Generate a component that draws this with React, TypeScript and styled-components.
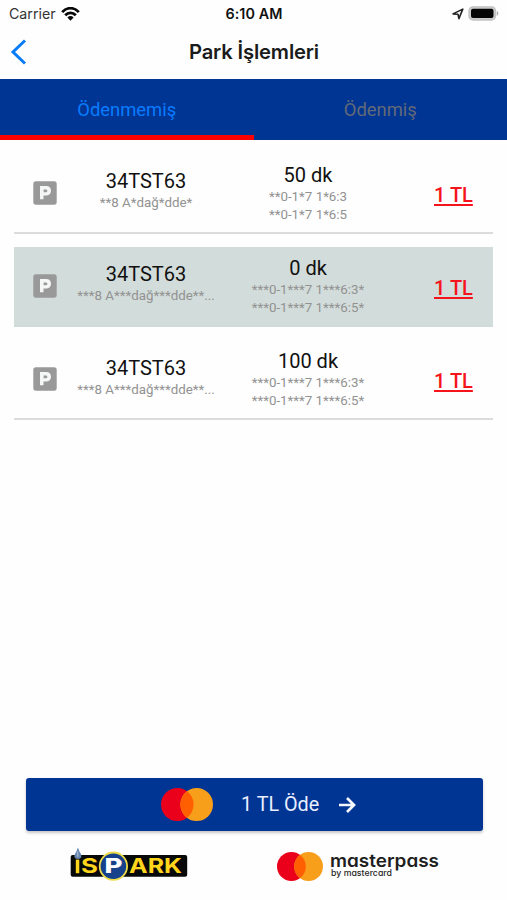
import React from "react";
import styled, { createGlobalStyle } from "styled-components";

const GlobalStyle = createGlobalStyle`
  * { box-sizing: border-box; }
  body { margin: 0; background: #fefefe; font-family: Roboto, sans-serif; color: #111; }
`;

const Screen = styled.main`
  width: 507px;
  height: 900px;
  display: flex;
  flex-direction: column;
  overflow: hidden;
  background: #fefefe;
`;

const StatusBar = styled.div`
  height: 27px;
  display: grid;
  grid-template-columns: 1fr auto 1fr;
  align-items: center;
  padding: 0 8px 0 9px;
  font-family: Inter, sans-serif;
  font-size: 14.2px;
  line-height: 27px;
`;

const StatusSide = styled.div<{ $end?: boolean }>`
  display: flex;
  align-items: center;
  gap: ${(p) => (p.$end ? 4 : 5.5)}px;
  justify-content: ${(p) => (p.$end ? "flex-end" : "flex-start")};
  color: #333;
`;

const Clock = styled.time`
  font-weight: 600;
  font-size: 14.3px;
  letter-spacing: 0.1px;
`;

const NavBar = styled.header`
  height: 52.4px;
  display: grid;
  grid-template-columns: 40px 1fr 39px;
  align-items: center;
  padding: 0 10px 1.5px;
`;

const BackButton = styled.button`
  display: flex;
  border: 0;
  padding: 0;
  background: none;
`;

const Title = styled.h1`
  margin: 0;
  text-align: center;
  font-family: Inter, sans-serif;
  font-weight: 600;
  font-size: 20.2px;
  letter-spacing: -0.15px;
  line-height: 50px;
  color: #1b1b1b;
`;

const Tabs = styled.nav`
  display: flex;
  height: 60.3px;
  background: #003594;
`;

const Tab = styled.button<{ $active?: boolean }>`
  flex: 1;
  border: 0;
  border-bottom: 5px solid ${(p) => (p.$active ? "#fe0000" : "transparent")};
  padding: 6px 0 0;
  background: none;
  font: 400 18.4px/50px Roboto, sans-serif;
  color: ${(p) => (p.$active ? "#087cff" : "#626a77")};
`;

const List = styled.section`
  flex: 1;
  display: flex;
  flex-direction: column;
  gap: 13.3px;
  padding: 14px 14px 0;
`;

const Row = styled.article<{ $selected?: boolean }>`
  height: 80px;
  display: grid;
  grid-template-columns: 62px 140px 184px 1fr;
  align-items: center;
  border-bottom: 2px solid ${(p) => (p.$selected ? "#cedbd8" : "#dcdcdc")};
  background: ${(p) => (p.$selected ? "#d2dcda" : "transparent")};
`;

const ParkBadge = styled.div`
  width: 24px;
  height: 24px;
  margin-left: 19px;
  display: flex;
`;

const Details = styled.div<{ $raised?: boolean }>`
  display: flex;
  flex-direction: column;
  align-items: center;
  white-space: nowrap;
  padding-top: ${(p) => (p.$raised ? 0 : 1)}px;
  padding-bottom: ${(p) => (p.$raised ? 4 : 0)}px;
`;

const Main = styled.strong`
  font-weight: 400;
  font-size: 20px;
  line-height: 25px;
  color: #111;
`;

const Small = styled.span`
  font-size: 13.35px;
  line-height: 18px;
  color: #929292;
`;

const Price = styled.a`
  padding: 4px 0 0 34px;
  font-weight: 500;
  font-size: 20px;
  line-height: 24px;
  white-space: nowrap;
  color: #f5141b;
  text-decoration: underline;
  text-decoration-thickness: 1.5px;
  text-underline-offset: 2px;
`;

const Footer = styled.footer`
  height: 122px;
  padding: 0 24px 0 26px;
`;

const PayButton = styled.button`
  width: 457px;
  height: 53px;
  display: flex;
  align-items: center;
  padding: 0 0 0 135px;
  border: 0;
  border-radius: 3px;
  background: #003594;
  box-shadow: 0 2px 3px rgba(0, 0, 0, 0.22);
  color: #e9efff;
  font: 400 19.8px/53px Roboto, sans-serif;
`;

const PayLabel = styled.span`
  margin: 0 19px 0 28px;
  white-space: nowrap;
`;

const Brands = styled.div`
  display: flex;
  align-items: flex-start;
  padding: 15px 0 0 44px;
  gap: 89px;
`;

function Wifi() {
  return (
    <svg width="19" height="14" viewBox="0 0 19 14" fill="none" stroke="#080808" strokeWidth="2.8">
      <path d="M1.2 5.1C6-.1 13-.1 17.8 5.1" />
      <path d="M4.2 8.3C7.3 5 11.7 5 14.8 8.3" />
      <path d="M6.4 10.4Q9.5 7.8 12.6 10.4L9.5 13.7Z" fill="#080808" stroke="none" />
    </svg>
  );
}

function LocationArrow() {
  return (
    <svg width="12" height="12" viewBox="0 0 12 12" fill="none" stroke="#222" strokeWidth="1.6" strokeLinejoin="round">
      <path d="M1 5.9L10.8 1.1L6.9 10.6L6 6.2Z" />
    </svg>
  );
}

function Battery() {
  return (
    <svg width="31" height="15" viewBox="0 0 31 15">
      <rect x="1" y=".8" width="26.5" height="13.2" rx="4" fill="#ccc" stroke="#c2c2c2" strokeWidth="1.3" />
      <rect x="3" y="2.8" width="22.5" height="9.3" rx="2" fill="#050505" />
      <path d="M28.8 4.8Q32 7.4 28.8 10Z" fill="#aaa" />
    </svg>
  );
}

function Parking() {
  return (
    <svg width="24" height="24" viewBox="0 0 24 24">
      <rect x=".3" y=".3" width="23.4" height="23.4" rx="2.6" fill="#999" />
      <path fillRule="evenodd" fill="#f5f7f6" d="M7 5H13C16.3 5 18 6.8 18 9.8C18 12.9 16.2 14.6 13 14.6H10.5V18.2H7ZM10.6 8.4V11.2H12.7C15 11.2 15 8.4 12.7 8.4Z" />
    </svg>
  );
}

function Circles({ width, height }: { width: number; height: number }) {
  return (
    <svg width={width} height={height} viewBox="0 0 52 32.6" preserveAspectRatio="none">
      <circle cx="16.3" cy="16.3" r="16.3" fill="#eb001b" />
      <circle cx="35.7" cy="16.3" r="16.3" fill="#f79e1b" />
      <path d="M26 3.2A16.3 16.3 0 0 1 26 29.4A16.3 16.3 0 0 1 26 3.2Z" fill="#ff5f00" />
    </svg>
  );
}

function IsparkLogo() {
  return (
    <svg width="118" height="36" viewBox="0 0 118 36">
      <rect x=".7" y="9" width="116.5" height="21.8" rx="2" fill="#070808" />
      <g fill="#ffd51c" fontFamily="Inter, sans-serif" fontWeight="700" fontSize="20">
        <path d="M5.8 13.6H9.3V27.2H5.8Z" />
        <text x="11" y="27.2" textLength="17" lengthAdjust="spacingAndGlyphs">S</text>
        <text x="59" y="27.2" textLength="53" lengthAdjust="spacingAndGlyphs">ARK</text>
      </g>
      <circle cx="43.4" cy="20.2" r="13.7" fill="#17418b" stroke="#eedc4a" strokeWidth="1.8" />
      <text x="34.6" y="27.2" fill="#fff" fontFamily="Inter, sans-serif" fontWeight="800" fontSize="20" textLength="18" lengthAdjust="spacingAndGlyphs">P</text>
      <path d="M7.9 1.5L9.5 5.6C13 10.8 11.2 13 7.9 13C4.3 13 3 10.5 6.4 5.6Z" fill="#6785ae" />
      <path d="M7.8 5.5V10.8" stroke="#b4c5dc" strokeWidth="1" />
    </svg>
  );
}

const Masterpass = styled.div`
  display: flex;
  align-items: flex-start;
  gap: 7px;
  padding-top: 6px;
`;

const Wordmark = styled.svg`
  display: block;
  margin-top: -4px;
  overflow: visible;
  font-family: Inter, sans-serif;
  font-feature-settings: "cv11" 1;
`;

function MasterpassWordmark() {
  return (
    <Wordmark width="112" height="34" viewBox="0 0 112 34" fill="#1e1e1e">
      <text x="0" y="19" fontSize="17.8" fontWeight="600" textLength="109" lengthAdjust="spacingAndGlyphs">masterpass</text>
      <text x="1" y="28.2" fontSize="8.6" fontWeight="500" textLength="61" lengthAdjust="spacingAndGlyphs">by mastercard</text>
    </Wordmark>
  );
}

const sessions = [
  { place: "**8 A*dağ*dde*", duration: "50 dk", start: "**0-1*7 1*6:3", end: "**0-1*7 1*6:5" },
  { place: "***8 A***dağ***dde**...", duration: "0 dk", start: "***0-1***7 1***6:3*", end: "***0-1***7 1***6:5*", selected: true },
  { place: "***8 A***dağ***dde**...", duration: "100 dk", start: "***0-1***7 1***6:3*", end: "***0-1***7 1***6:5*" },
];

export default function App() {
  return (
    <Screen>
      <GlobalStyle />
      <StatusBar>
        <StatusSide>Carrier <Wifi /></StatusSide>
        <Clock>6:10 AM</Clock>
        <StatusSide $end><LocationArrow /><Battery /></StatusSide>
      </StatusBar>
      <NavBar>
        <BackButton aria-label="Geri">
          <svg width="18" height="26" viewBox="0 0 18 26" fill="none" stroke="#087bf5" strokeWidth="3">
            <path d="M15 1.5L3 13L15 24.5" />
          </svg>
        </BackButton>
        <Title>Park İşlemleri</Title>
      </NavBar>
      <Tabs>
        <Tab $active>Ödenmemiş</Tab>
        <Tab>Ödenmiş</Tab>
      </Tabs>
      <List>
        {sessions.map((s) => (
          <Row key={s.duration} $selected={s.selected}>
            <ParkBadge><Parking /></ParkBadge>
            <Details $raised><Main>34TST63</Main><Small>{s.place}</Small></Details>
            <Details><Main>{s.duration}</Main><Small>{s.start}</Small><Small>{s.end}</Small></Details>
            <Price>1 TL</Price>
          </Row>
        ))}
      </List>
      <Footer>
        <PayButton>
          <Circles width={52} height={33} />
          <PayLabel>1 TL Öde</PayLabel>
          <svg width="18" height="18" viewBox="0 0 18 18" fill="none" stroke="#f4f7ff" strokeWidth="2.7">
            <path d="M1 9H16M9 2L16 9L9 16" />
          </svg>
        </PayButton>
        <Brands>
          <IsparkLogo />
          <Masterpass>
            <Circles width={46} height={29} />
            <MasterpassWordmark />
          </Masterpass>
        </Brands>
      </Footer>
    </Screen>
  );
}
